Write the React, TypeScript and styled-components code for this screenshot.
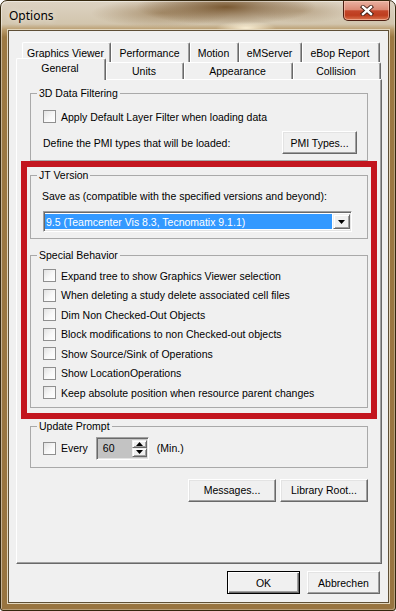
import React from 'react';
import styled, { createGlobalStyle, css } from 'styled-components';

const GlobalStyle = createGlobalStyle`
  html, body { margin: 0; padding: 0; background: #ffffff; }
  body { font-family: "Liberation Sans", Arial, sans-serif; }
  *, *::before, *::after { box-sizing: border-box; }
`;

const Window = styled.div`
  width: 396px;
  height: 611px;
  display: flex;
  flex-direction: column;
  border: 1px solid #35280f;
  border-radius: 7px 7px 3px 3px;
  overflow: hidden;
  background:
    radial-gradient(ellipse 90px 18px at 225px 6px, rgba(105, 68, 26, 0.85), rgba(105, 68, 26, 0) 100%),
    radial-gradient(ellipse 70px 14px at 160px 12px, rgba(130, 95, 50, 0.5), rgba(130, 95, 50, 0) 100%),
    radial-gradient(ellipse 50px 12px at 300px 10px, rgba(130, 95, 50, 0.35), rgba(130, 95, 50, 0) 100%),
    radial-gradient(ellipse 30px 7px at 245px 27px, rgba(255, 245, 220, 0.9), rgba(255, 245, 220, 0) 100%),
    linear-gradient(180deg, #ddd3c3 0px, #d2c5ad 23px, #b89a6a 29px, #9c7943 36px, #987440 100%);
  box-shadow: inset 1px 1px 0 rgba(255, 255, 255, 0.45), inset -1px -1px 0 rgba(255, 255, 255, 0.3);
`;

const TitleBar = styled.div`
  height: 29px;
  flex: none;
  display: flex;
  align-items: flex-start;
  justify-content: space-between;
  padding-left: 8px;
`;

const TitleText = styled.div`
  padding-top: 7px;
  font-family: "Noto Sans", "Open Sans", sans-serif;
  font-size: 12px;
  line-height: 16px;
  color: #000;
  text-shadow: 0 0 6px rgba(255, 255, 255, 0.9);
`;

const CloseButton = styled.div`
  width: 47px;
  height: 20px;
  margin-right: 5px;
  display: flex;
  align-items: center;
  justify-content: center;
  border: 1px solid #4e1f12;
  border-top: none;
  border-radius: 0 0 5px 5px;
  background: linear-gradient(180deg, #e9b2a2 0%, #db8a75 45%, #c4462a 52%, #be3d1e 75%, #d9734e 100%);
  box-shadow: inset 0 0 0 1px rgba(255, 210, 190, 0.55);
`;

const Client = styled.div`
  flex: 1;
  margin: 0 6px 7px 7px;
  display: flex;
  flex-direction: column;
  padding: 11px 6px 8px 7px;
  background: #f0f0f0;
  border: 1px solid #5e4f36;
  box-shadow: 0 0 0 1px #e2d6bd;
  font-family: "Liberation Sans", Arial, sans-serif;
  font-size: 10.5px;
  color: #000;
`;

const TabStrip = styled.div`
  display: flex;
  flex-direction: column;
  flex: none;
`;

const TabRow = styled.div<{ $h: number; $indent: number }>`
  height: ${p => p.$h}px;
  padding-left: ${p => p.$indent}px;
  display: flex;
  align-items: flex-end;
`;

const Tab = styled.div<{ $w: number; $selected?: boolean }>`
  width: ${p => p.$w}px;
  height: 100%;
  flex: none;
  display: flex;
  align-items: center;
  justify-content: center;
  padding-right: 2px;
  background: #f0f0f0;
  border-top: 1px solid #ffffff;
  border-left: 1px solid #ffffff;
  border-right: 1px solid #696969;
  border-radius: 2px 2px 0 0;
  box-shadow: inset -1px 0 0 #a0a0a0;
  white-space: nowrap;
  ${p =>
    p.$selected &&
    css`
      position: relative;
      z-index: 1;
      height: calc(100% + 5px);
      margin-bottom: -1px;
      padding-bottom: 3px;
    `}
`;

const Pane = styled.div`
  flex: 1;
  display: flex;
  flex-direction: column;
  padding: 7px 4px 0;
  background: #f0f0f0;
  border: 1px solid;
  border-color: #ffffff #696969 #696969 #ffffff;
  box-shadow: inset -1px -1px 0 #a0a0a0;
`;

const GroupBox = styled.fieldset<{ $mx?: number; $mt?: number; $pb: number }>`
  margin: ${p => p.$mt ?? 0}px ${p => p.$mx ?? 0}px 0;
  padding: 0 0 ${p => p.$pb}px 6px;
  border: 1px solid #a9a9a9;
  min-width: 0;
`;

const Legend = styled.legend`
  padding: 0 2px;
  font-size: 10.5px;
  line-height: 13px;
`;

const GroupBody = styled.div<{ $pr?: number }>`
  padding-left: 6px;
  padding-right: ${p => p.$pr ?? 0}px;
  display: flex;
  flex-direction: column;
`;

const Highlight = styled.div`
  padding: 2px 3px 5px;
  border: 6px solid #c3161f;
  display: flex;
  flex-direction: column;
`;

const CheckRow = styled.div<{ $h?: number; $mt?: number }>`
  height: ${p => p.$h ?? 13}px;
  margin-top: ${p => p.$mt ?? 0}px;
  display: flex;
  align-items: center;
  white-space: nowrap;
`;

const CheckBox = styled.span`
  width: 13px;
  height: 13px;
  flex: none;
  margin-right: 5px;
  background: linear-gradient(135deg, #e2e2e2 0%, #f8f8f8 55%, #ffffff 100%);
  border: 1px solid #8f8f8f;
`;

const CheckList = styled.div`
  margin-top: 4px;
  display: flex;
  flex-direction: column;
`;

const TextLine = styled.div<{ $mt?: number }>`
  margin-top: ${p => p.$mt ?? 0}px;
  margin-left: -1px;
  line-height: 13px;
  white-space: nowrap;
`;

const FieldRow = styled.div<{ $mt?: number }>`
  margin-top: ${p => p.$mt ?? 0}px;
  display: flex;
  align-items: center;
  justify-content: space-between;
`;

const PushButton = styled.button<{ $w: number; $default?: boolean }>`
  width: ${p => p.$w}px;
  height: 23px;
  flex: none;
  padding: 0;
  font-family: "Liberation Sans", Arial, sans-serif;
  font-size: 10.5px;
  color: #000;
  background: #f0f0f0;
  border: 1px solid;
  border-color: #ffffff #696969 #696969 #ffffff;
  box-shadow: inset -1px -1px 0 #a0a0a0, inset 1px 1px 0 #e3e3e3;
  ${p =>
    p.$default &&
    css`
      border: 1px solid #000;
      box-shadow: inset 1px 1px 0 #ffffff, inset -1px -1px 0 #696969, inset -2px -2px 0 #a0a0a0;
    `}
`;

const Combo = styled.div`
  margin-top: 8px;
  width: 309px;
  height: 21px;
  display: flex;
  padding: 2px 1px 2px 1px;
  border: 1px solid;
  border-color: #a0a0a0 #ffffff #ffffff #a0a0a0;
  box-shadow: inset 1px 1px 0 #696969, inset -1px -1px 0 #e3e3e3;
  background: #ffffff;
`;

const ComboSelection = styled.div`
  flex: 1;
  margin-right: 1px;
  padding-left: 1px;
  display: flex;
  align-items: center;
  background: #3399ff;
  color: #ffffff;
  white-space: nowrap;
  overflow: hidden;
`;

const Raised = css`
  display: flex;
  align-items: center;
  justify-content: center;
  background: #f0f0f0;
  border: 1px solid;
  border-color: #f0f0f0 #696969 #696969 #f0f0f0;
  box-shadow: inset 1px 1px 0 #ffffff, inset -1px -1px 0 #a0a0a0;
`;

const ComboButton = styled.div`
  width: 17px;
  ${Raised}
`;

const Spinner = styled.div`
  margin-left: 8px;
  width: 53px;
  height: 23px;
  display: flex;
  padding: 2px 1px 2px 2px;
  border: 1px solid;
  border-color: #a0a0a0 #ffffff #ffffff #a0a0a0;
  box-shadow: inset 1px 1px 0 #696969, inset -1px -1px 0 #e3e3e3;
  background: #c3c3c3;
`;

const SpinValue = styled.div`
  flex: 1;
  padding-left: 4px;
  display: flex;
  align-items: center;
`;

const SpinButtons = styled.div`
  width: 15px;
  display: flex;
  flex-direction: column;
  background: #ffffff;
`;

const SpinButton = styled.div`
  flex: 1;
  ${Raised}
`;

const Unit = styled.span`
  margin-left: 8px;
`;

const ButtonRow = styled.div<{ $mt: number; $mr: number; $gap: number }>`
  margin-top: ${p => p.$mt}px;
  margin-right: ${p => p.$mr}px;
  display: flex;
  justify-content: flex-end;
  gap: ${p => p.$gap}px;
  flex: none;
`;

const Triangle = ({ dir, w, h }: { dir: 'up' | 'down'; w: number; h: number }) => (
  <svg width={w} height={h} viewBox={`0 0 ${w} ${h}`} style={{ display: 'block' }}>
    <polygon
      points={dir === 'down' ? `0,0 ${w},0 ${w / 2},${h}` : `0,${h} ${w},${h} ${w / 2},0`}
      fill="#000"
    />
  </svg>
);

const CloseGlyph = () => (
  <svg width="14" height="11" viewBox="0 0 14 11" style={{ display: 'block' }}>
    <path d="M3 2 L11 9 M11 2 L3 9" stroke="#3b1a10" strokeWidth="4.2" strokeLinecap="square" fill="none" />
    <path d="M3 2 L11 9 M11 2 L3 9" stroke="#ffffff" strokeWidth="2.4" strokeLinecap="square" fill="none" />
  </svg>
);

const backTabs = [
  { label: 'Graphics Viewer', w: 89 },
  { label: 'Performance', w: 79 },
  { label: 'Motion', w: 49 },
  { label: 'eMServer', w: 63 },
  { label: 'eBop Report', w: 78 },
];

const frontTabs = [
  { label: 'General', w: 90, selected: true },
  { label: 'Units', w: 78 },
  { label: 'Appearance', w: 109 },
  { label: 'Collision', w: 88 },
];

const behaviors = [
  'Expand tree to show Graphics Viewer selection',
  'When deleting a study delete associated cell files',
  'Dim Non Checked-Out Objects',
  'Block modifications to non Checked-out objects',
  'Show Source/Sink of Operations',
  'Show LocationOperations',
  'Keep absolute position when resource parent changes',
];

export default function App() {
  return (
    <>
      <GlobalStyle />
      <Window>
        <TitleBar>
          <TitleText>Options</TitleText>
          <CloseButton>
            <CloseGlyph />
          </CloseButton>
        </TitleBar>
        <Client>
          <TabStrip>
            <TabRow $h={20} $indent={6}>
              {backTabs.map(t => (
                <Tab key={t.label} $w={t.w}>
                  {t.label}
                </Tab>
              ))}
            </TabRow>
            <TabRow $h={17} $indent={0}>
              {frontTabs.map(t => (
                <Tab key={t.label} $w={t.w} $selected={t.selected}>
                  {t.label}
                </Tab>
              ))}
            </TabRow>
          </TabStrip>
          <Pane>
            <GroupBox $mx={9} $pb={6}>
              <Legend>3D Data Filtering</Legend>
              <GroupBody $pr={10}>
                <CheckRow $mt={10}>
                  <CheckBox />
                  Apply Default Layer Filter when loading data
                </CheckRow>
                <FieldRow $mt={8}>
                  <span>Define the PMI types that will be loaded:</span>
                  <PushButton $w={75}>PMI Types...</PushButton>
                </FieldRow>
              </GroupBody>
            </GroupBox>
            <Highlight>
              <GroupBox $pb={6}>
                <Legend>JT Version</Legend>
                <GroupBody>
                  <TextLine $mt={8}>Save as (compatible with the specified versions and beyond):</TextLine>
                  <Combo>
                    <ComboSelection>9.5 (Teamcenter Vis 8.3, Tecnomatix 9.1.1)</ComboSelection>
                    <ComboButton>
                      <Triangle dir="down" w={7} h={4} />
                    </ComboButton>
                  </Combo>
                </GroupBody>
              </GroupBox>
              <GroupBox $mt={10} $pb={4}>
                <Legend>Special Behavior</Legend>
                <GroupBody>
                  <CheckList>
                    {behaviors.map(b => (
                      <CheckRow key={b} $h={19.5}>
                        <CheckBox />
                        {b}
                      </CheckRow>
                    ))}
                  </CheckList>
                </GroupBody>
              </GroupBox>
            </Highlight>
            <GroupBox $mx={9} $mt={1} $pb={7}>
              <Legend>Update Prompt</Legend>
              <GroupBody>
                <CheckRow $h={23} $mt={4}>
                  <CheckBox />
                  Every
                  <Spinner>
                    <SpinValue>60</SpinValue>
                    <SpinButtons>
                      <SpinButton>
                        <Triangle dir="up" w={7} h={4} />
                      </SpinButton>
                      <SpinButton>
                        <Triangle dir="down" w={7} h={4} />
                      </SpinButton>
                    </SpinButtons>
                  </Spinner>
                  <Unit>(Min.)</Unit>
                </CheckRow>
              </GroupBody>
            </GroupBox>
            <ButtonRow $mt={11} $mr={9} $gap={4}>
              <PushButton $w={88}>Messages...</PushButton>
              <PushButton $w={88}>Library Root...</PushButton>
            </ButtonRow>
          </Pane>
          <ButtonRow $mt={7} $mr={2} $gap={7}>
            <PushButton $w={73} $default>
              OK
            </PushButton>
            <PushButton $w={73}>Abbrechen</PushButton>
          </ButtonRow>
        </Client>
      </Window>
    </>
  );
}
